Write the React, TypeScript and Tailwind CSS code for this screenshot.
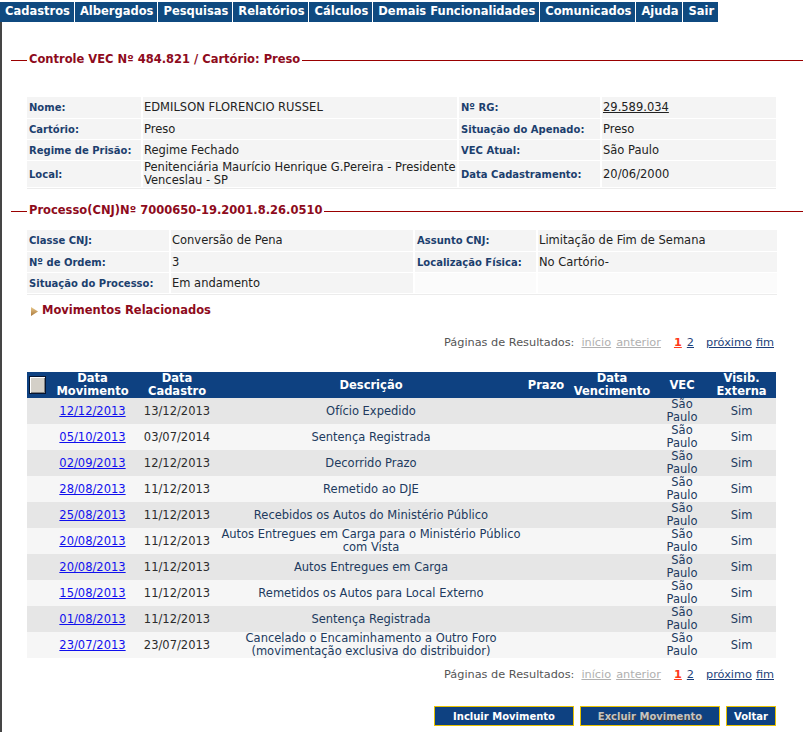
import React from "react";

const menu = [
  "Cadastros",
  "Albergados",
  "Pesquisas",
  "Relatórios",
  "Cálculos",
  "Demais Funcionalidades",
  "Comunicados",
  "Ajuda",
  "Sair",
];

const movimentos = [
  { mov: "12/12/2013", cad: "13/12/2013", desc: ["Ofício Expedido"] },
  { mov: "05/10/2013", cad: "03/07/2014", desc: ["Sentença Registrada"] },
  { mov: "02/09/2013", cad: "12/12/2013", desc: ["Decorrido Prazo"] },
  { mov: "28/08/2013", cad: "11/12/2013", desc: ["Remetido ao DJE"] },
  { mov: "25/08/2013", cad: "11/12/2013", desc: ["Recebidos os Autos do Ministério Público"] },
  {
    mov: "20/08/2013",
    cad: "11/12/2013",
    desc: ["Autos Entregues em Carga para o Ministério Público", "com Vista"],
  },
  { mov: "20/08/2013", cad: "11/12/2013", desc: ["Autos Entregues em Carga"] },
  { mov: "15/08/2013", cad: "11/12/2013", desc: ["Remetidos os Autos para Local Externo"] },
  { mov: "01/08/2013", cad: "11/12/2013", desc: ["Sentença Registrada"] },
  {
    mov: "23/07/2013",
    cad: "23/07/2013",
    desc: ["Cancelado o Encaminhamento a Outro Foro", "(movimentação exclusiva do distribuidor)"],
  },
];

function SectionTitle({ text }: { text: string }) {
  return (
    <div className="flex items-center h-[14px]">
      <div className="ml-[9px] w-[16px] h-px bg-[#9a0000]" />
      <span className="px-[2px] font-bold text-[11.5px] text-[#8e0b1c] whitespace-nowrap">
        {text}
      </span>
      <div className="flex-1 h-px bg-[#9a0000]" />
    </div>
  );
}

const Label = ({ children }: { children: React.ReactNode }) => (
  <div className="bg-[#f4f4f4] flex items-center pl-[2px] font-bold text-[10px] text-[#1c3f6e] whitespace-nowrap">
    {children}
  </div>
);

const Value = ({ children }: { children?: React.ReactNode }) => (
  <div className="bg-[#f4f4f4] flex items-center pl-[1px] text-[11.5px] leading-[13px] text-[#222]">
    {children}
  </div>
);

function Paginacao() {
  return (
    <div className="flex justify-end items-center h-[14px] w-[749px] ml-[25px] pr-[2px] text-[11.3px] whitespace-nowrap">
      <span className="text-[#555]">Páginas de Resultados:</span>
      <span className="ml-[7px] text-[#b0b0b0] underline">início</span>
      <span className="ml-[5px] text-[#b0b0b0] underline">anterior</span>
      <span className="ml-[13px] text-[#ff3a1a] font-bold underline">1</span>
      <span className="ml-[5px] text-[#1d3f7a] underline">2</span>
      <span className="ml-[12px] text-[#1d3f7a] underline">próximo</span>
      <span className="ml-[4px] text-[#1d3f7a] underline">fim</span>
    </div>
  );
}

export default function App() {
  return (
    <div className="min-h-[732px] flex flex-col bg-white font-['DejaVu_Sans',Verdana,sans-serif]">
      {/* menu */}
      <div className="pt-[2px] flex">
        <div className="flex h-[20px] bg-[#0f4a80]">
          {menu.map((m) => (
            <div
              key={m}
              className="flex items-center pl-[5px] pr-[4px] border-r border-white text-white font-bold text-[11.5px] whitespace-nowrap"
            >
              {m}
            </div>
          ))}
        </div>
      </div>

      <div className="flex-1 border-l-2 border-[#454545]">
        <div className="mt-[31px]">
          <SectionTitle text="Controle VEC Nº 484.821 / Cartório: Preso" />
        </div>

        <div className="ml-[25px] mt-[30px] w-[749px] grid grid-cols-[114px_314px_141px_174px] grid-rows-[21px_20px_20px_26px] gap-x-[2px] gap-y-px">
          <Label>Nome:</Label>
          <Value>EDMILSON FLORENCIO RUSSEL</Value>
          <Label>Nº RG:</Label>
          <Value>
            <span className="underline">29.589.034</span>
          </Value>
          <Label>Cartório:</Label>
          <Value>Preso</Value>
          <Label>Situação do Apenado:</Label>
          <Value>Preso</Value>
          <Label>Regime de Prisão:</Label>
          <Value>Regime Fechado</Value>
          <Label>VEC Atual:</Label>
          <Value>São Paulo</Value>
          <Label>Local:</Label>
          <Value>
            <span className="whitespace-nowrap">
              Penitenciária Maurício Henrique G.Pereira - Presidente
              <br />
              Venceslau - SP
            </span>
          </Value>
          <Label>Data Cadastramento:</Label>
          <Value>20/06/2000</Value>
        </div>
        <div className="ml-[25px] w-[749px] h-px bg-[#ececec] mt-px" />

        <div className="mt-[15px]">
          <SectionTitle text="Processo(CNJ)Nº 7000650-19.2001.8.26.0510" />
        </div>

        <div className="ml-[25px] mt-[12px] w-[750px] grid grid-cols-[142px_242px_121px_239px] grid-rows-[21px_20px_20px] gap-x-[2px] gap-y-px">
          <Label>Classe CNJ:</Label>
          <Value>Conversão de Pena</Value>
          <Label>Assunto CNJ:</Label>
          <Value>Limitação de Fim de Semana</Value>
          <Label>Nº de Ordem:</Label>
          <Value>3</Value>
          <Label>Localização Física:</Label>
          <Value>No Cartório-</Value>
          <Label>Situação do Processo:</Label>
          <Value>Em andamento</Value>
          <div className="bg-[#fbfbfb]" />
          <div className="bg-[#fbfbfb]" />
        </div>
        <div className="ml-[25px] w-[750px] h-px bg-[#ececec] mt-px" />

        <div className="mt-[9px] ml-[29px] flex items-center h-[14px]">
          <svg width="7" height="9" viewBox="0 0 7 9" className="mr-[4px]">
            <defs>
              <linearGradient id="tri" x1="0" y1="0" x2="0" y2="1">
                <stop offset="0" stopColor="#e9c98c" />
                <stop offset="1" stopColor="#a9773a" />
              </linearGradient>
            </defs>
            <polygon points="0,0 7,4.5 0,9" fill="url(#tri)" />
          </svg>
          <span className="font-bold text-[11.5px] text-[#8e0b1c]">Movimentos Relacionados</span>
        </div>

        <div className="mt-[18px]">
          <Paginacao />
        </div>

        <table className="ml-[25px] mt-[22px] w-[749px] table-fixed border-collapse text-[11.5px] leading-[13px]">
          <colgroup>
            <col className="w-[21px]" />
            <col className="w-[89px]" />
            <col className="w-[80px]" />
            <col className="w-[308px]" />
            <col className="w-[42px]" />
            <col className="w-[90px]" />
            <col className="w-[50px]" />
            <col className="w-[69px]" />
          </colgroup>
          <thead>
            <tr className="h-[26px] bg-[#0e4181] text-white font-bold leading-[13px]">
              <th className="p-0 align-middle">
                <div className="ml-[2px] w-[17px] h-[18px] border border-[#06142e] bg-[#d4d0c8] shadow-[inset_1px_1px_0_#ffffff,inset_-1px_-1px_0_#808080]" />
              </th>
              <th className="p-0 font-bold">
                Data
                <br />
                Movimento
              </th>
              <th className="p-0 font-bold">
                Data
                <br />
                Cadastro
              </th>
              <th className="p-0 font-bold">Descrição</th>
              <th className="p-0 font-bold">Prazo</th>
              <th className="p-0 font-bold">
                Data
                <br />
                Vencimento
              </th>
              <th className="p-0 font-bold">VEC</th>
              <th className="p-0 font-bold">
                Visib.
                <br />
                Externa
              </th>
            </tr>
          </thead>
          <tbody>
            {movimentos.map((r, i) => (
              <tr
                key={i}
                className={`h-[26px] ${i % 2 === 0 ? "bg-[#e6e6e6]" : "bg-[#f6f6f6]"}`}
              >
                <td className="p-0" />
                <td className="p-0 text-center">
                  <span className="text-[#1010ee] underline">{r.mov}</span>
                </td>
                <td className="p-0 text-center text-[#2c2c2c]">{r.cad}</td>
                <td className="p-0 text-center text-[#213a5e]">
                  {r.desc.map((d, j) => (
                    <div key={j} className="whitespace-nowrap">
                      {d}
                    </div>
                  ))}
                </td>
                <td className="p-0" />
                <td className="p-0" />
                <td className="p-0 text-center text-[#213a5e]">
                  São
                  <br />
                  Paulo
                </td>
                <td className="p-0 text-center text-[#213a5e]">Sim</td>
              </tr>
            ))}
          </tbody>
        </table>

        <div className="mt-[10px]">
          <Paginacao />
        </div>

        <div className="mt-[24px] ml-[25px] w-[749px] flex justify-end gap-[6px]">
          <button className="w-[140px] h-[20px] bg-[#0e4181] border border-[#e8c200] text-white font-bold text-[10px]">
            Incluir Movimento
          </button>
          <button className="w-[140px] h-[20px] bg-[#0e4181] border border-[#e8c200] text-[#c4c4c4] font-bold text-[10px] [text-shadow:1px_1px_0_#3a3a3a]">
            Excluir Movimento
          </button>
          <button className="w-[50px] h-[20px] bg-[#0e4181] border border-[#e8c200] text-white font-bold text-[10px]">
            Voltar
          </button>
        </div>
      </div>
    </div>
  );
}
